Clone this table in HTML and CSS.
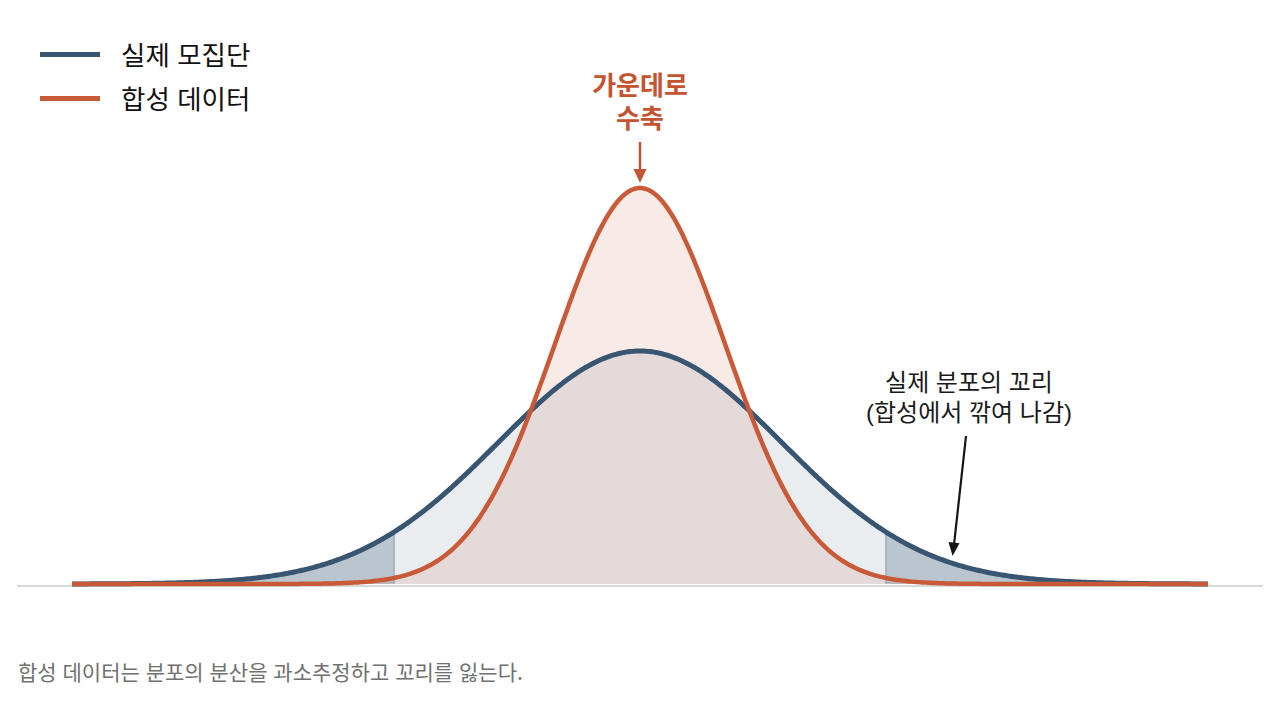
FILE: index.html
```html
<!DOCTYPE html>
<html lang="ko">
<head>
<meta charset="utf-8">
<title>실제 모집단 vs 합성 데이터</title>
<link rel="stylesheet" href="styles.css">
</head>
<body>
<div class="figure">
  <svg class="chart" width="1280" height="640" viewBox="0 0 1280 640" xmlns="http://www.w3.org/2000/svg">
    <line class="axis" x1="17" y1="586" x2="1263" y2="586"/>
    <path id="blueFill" class="blue-fill"/>
    <path id="tailL" class="tail-fill"/>
    <path id="tailR" class="tail-fill"/>
    <path id="orangeFill" class="orange-fill"/>
    <line id="cutL" class="cut"/>
    <line id="cutR" class="cut"/>
    <path id="blueLine" class="blue-line"/>
    <path id="orangeLine" class="orange-line"/>

    <line class="arrow-orange" x1="640" y1="142" x2="640" y2="171"/>
    <polygon class="head-orange" points="633.5,169 646.5,169 640,183"/>

    <line class="arrow-dark" x1="966" y1="436" x2="954.2" y2="543"/>
    <polygon class="head-dark" points="948.5,542 959.5,543.2 952.6,556"/>
  </svg>

  <div class="note note-center">가운데로<br>수축</div>
  <div class="note note-tail">실제 분포의 꼬리<br>(합성에서 깎여 나감)</div>

  <ul class="legend">
    <li class="legend-item"><span class="swatch swatch-blue"></span><span>실제 모집단</span></li>
    <li class="legend-item"><span class="swatch swatch-orange"></span><span>합성 데이터</span></li>
  </ul>
</div>
<p class="caption">합성 데이터는 분포의 분산을 과소추정하고 꼬리를 잃는다.</p>
<script src="script.js"></script>
</body>
</html>
```

FILE: styles.css
```css
* { box-sizing: border-box; }

body {
  margin: 0;
  background: #ffffff;
  font-family: "Noto Sans CJK KR", "Noto Sans", sans-serif;
}

.figure {
  position: relative;
  width: 1280px;
  height: 640px;
}

.chart {
  display: block;
}

.axis {
  stroke: #d6d9dc;
  stroke-width: 2;
}

.blue-fill {
  fill: rgba(58, 90, 120, 0.11);
}

.tail-fill {
  fill: rgba(58, 90, 120, 0.27);
}

.orange-fill {
  fill: rgba(200, 90, 58, 0.13);
}

.cut {
  stroke: #9eaebc;
  stroke-width: 1.6;
}

.blue-line {
  fill: none;
  stroke: #385672;
  stroke-width: 5;
  stroke-linejoin: round;
}

.orange-line {
  fill: none;
  stroke: #c85a38;
  stroke-width: 4.5;
  stroke-linejoin: round;
}

.arrow-orange {
  stroke: #c4532f;
  stroke-width: 2.5;
}

.head-orange {
  fill: #c4532f;
}

.arrow-dark {
  stroke: #151515;
  stroke-width: 2.2;
}

.head-dark {
  fill: #151515;
}

.note {
  position: absolute;
  width: 240px;
  text-align: center;
  white-space: nowrap;
  font-family: "Liberation Sans", "Noto Sans CJK KR", sans-serif;
}

.note-center {
  left: 520px;
  top: 70px;
  font-size: 26px;
  line-height: 33px;
  font-weight: 700;
  color: #c4532f;
}

.note-tail {
  left: 849px;
  top: 368px;
  font-size: 24px;
  line-height: 30px;
  color: #1a1a1a;
}

.legend {
  position: absolute;
  left: 40px;
  top: 32px;
  margin: 0;
  padding: 0;
  list-style: none;
  display: flex;
  flex-direction: column;
}

.legend-item {
  display: flex;
  align-items: center;
  gap: 21px;
  height: 44px;
  font-size: 26.5px;
  line-height: 1;
  color: #111111;
}

.swatch {
  display: block;
  width: 60px;
  height: 5px;
}

.swatch-blue {
  background: #385672;
}

.swatch-orange {
  background: #c85a38;
}

.caption {
  margin: 0;
  padding: 19px 0 0 18px;
  font-size: 21px;
  line-height: 24px;
  color: #707070;
}
```

FILE: script.js
```js
(function () {
  var X0 = 640, XMIN = 72, XMAX = 1208, Y0 = 584, CUT = 246;
  var BLUE = { a: 233, s: 142 };
  var ORANGE = { a: 396, s: 85 };

  function y(c, x) {
    var d = x - X0;
    return Y0 - c.a * Math.exp(-(d * d) / (2 * c.s * c.s));
  }

  function pts(c, a, b) {
    var out = [];
    for (var x = a; x < b; x += 2) out.push(x.toFixed(1) + "," + y(c, x).toFixed(2));
    out.push(b.toFixed(1) + "," + y(c, b).toFixed(2));
    return out;
  }

  function line(c, a, b) {
    return "M" + pts(c, a, b).join(" L");
  }

  function area(c, a, b) {
    return "M" + a + "," + Y0 + " L" + pts(c, a, b).join(" L") + " L" + b + "," + Y0 + " Z";
  }

  function set(id, d) {
    document.getElementById(id).setAttribute("d", d);
  }

  set("blueFill", area(BLUE, XMIN, XMAX));
  set("orangeFill", area(ORANGE, XMIN, XMAX));
  set("tailL", area(BLUE, XMIN, X0 - CUT));
  set("tailR", area(BLUE, X0 + CUT, XMAX));
  set("blueLine", line(BLUE, XMIN, XMAX));
  set("orangeLine", line(ORANGE, XMIN, XMAX));

  [["cutL", X0 - CUT], ["cutR", X0 + CUT]].forEach(function (p) {
    var el = document.getElementById(p[0]);
    el.setAttribute("x1", p[1]);
    el.setAttribute("x2", p[1]);
    el.setAttribute("y1", Y0);
    el.setAttribute("y2", y(BLUE, p[1]) + 2);
  });
})();
```
